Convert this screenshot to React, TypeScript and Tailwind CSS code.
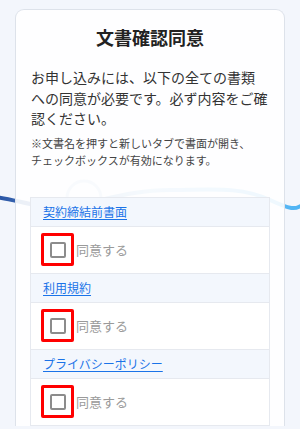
const docs = ["契約締結前書面", "利用規約", "プライバシーポリシー"];

export default function App() {
  return (
    <div
      className="relative h-[429px] w-[300px] overflow-hidden bg-[#f3f6fc] pt-[9px]"
      style={{ fontFamily: '"Noto Sans CJK JP", "Noto Sans", sans-serif' }}
    >
      <svg
        className="absolute left-0 top-0"
        width="300"
        height="429"
        viewBox="0 0 300 429"
        fill="none"
      >
        <defs>
          <linearGradient id="wave" x1="0" y1="0" x2="300" y2="0" gradientUnits="userSpaceOnUse">
            <stop offset="0" stopColor="#2a56a6" />
            <stop offset="0.5" stopColor="#9cc8ef" />
            <stop offset="1" stopColor="#4fb4f4" />
          </linearGradient>
        </defs>
        <path
          d="M-5 197 C 20 200, 40 210, 70 206 S 130 190, 170 190 S 240 186, 270 200 S 295 206, 305 205"
          stroke="url(#wave)"
          strokeWidth="4"
        />
        <circle cx="84" cy="198" r="17" stroke="#b9cfea" strokeWidth="3" />
      </svg>

      <div className="relative mx-[15px] rounded-t-[9px] border border-b-0 border-[#dde2ea] bg-white/90 px-[14px] pt-[14px]">
        <h1 className="text-center text-[18px] font-bold leading-[27px] text-[#222]">
          文書確認同意
        </h1>
        <p className="mt-[16px] pl-[1px] text-[14px] leading-[20.5px] text-[#333]">
          お申し込みには、以下の全ての書類
          <br />
          への同意が必要です。必ず内容をご確認ください。
        </p>
        <p className="mt-[6px] pl-[1px] pr-[10px] text-[11px] leading-[17px] text-[#444]">
          ※文書名を押すと新しいタブで書面が開き、チェックボックスが有効になります。
        </p>

        <div className="mt-[28px] border border-[#e6e9ef] bg-white">
          {docs.map((name, i) => (
            <div key={name} className={i > 0 ? "border-t border-[#e6e9ef]" : ""}>
              <div className="flex h-[28px] items-center bg-[#f3f7fd] px-[12px]">
                <a
                  href="#"
                  className="text-[12px] leading-none text-[#1a73e8] underline underline-offset-2"
                >
                  {name}
                </a>
              </div>
              <div className="flex h-[47px] items-center border-t border-[#e6e9ef] pl-[10px]">
                <span className="flex h-[33px] w-[33px] items-center justify-center rounded-[2px] border-[3px] border-[#ff0000]">
                  <span className="h-[16px] w-[16px] rounded-[2px] border-2 border-[#8c8c8c] bg-white" />
                </span>
                <span className="ml-[2px] text-[13px] text-[#9a9a9a]">同意する</span>
              </div>
            </div>
          ))}
        </div>
      </div>
    </div>
  );
}
